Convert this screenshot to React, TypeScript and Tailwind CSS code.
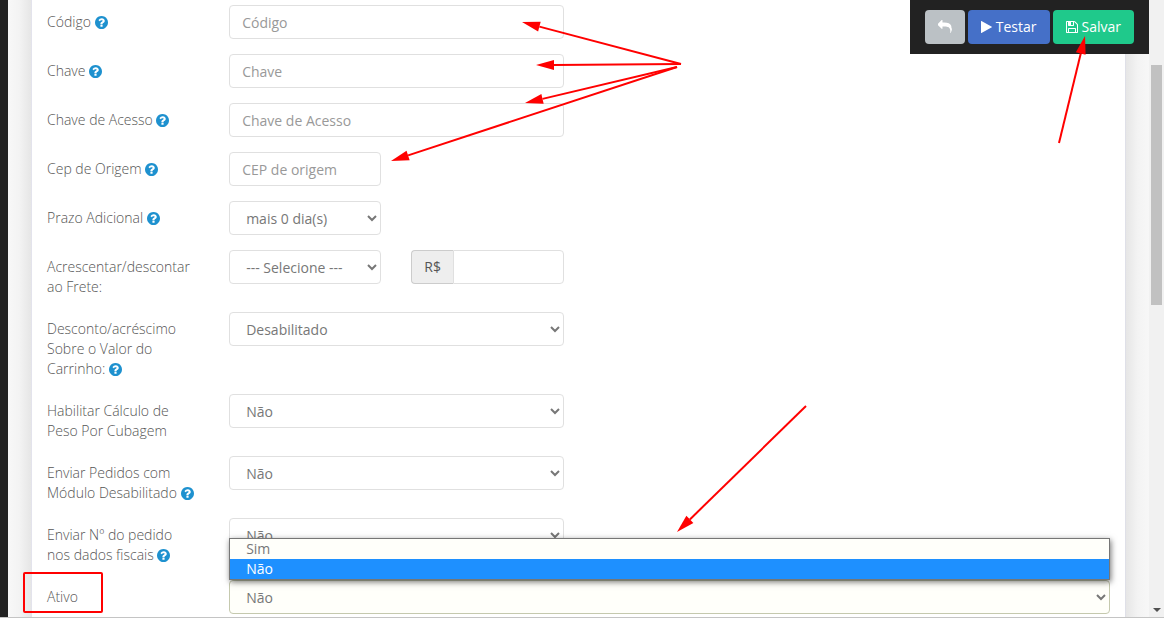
import type { ReactNode } from "react";

const ICONS = {
  help: "M1024 1376v-192q0-14-9-23t-23-9h-192q-14 0-23 9t-9 23v192q0 14 9 23t23 9h192q14 0 23-9t9-23zm256-672q0-88-55.5-163t-138.5-116-170-41q-243 0-371 213-15 24 8 42l132 100q7 6 19 6 16 0 25-12 53-68 86-92 34-24 86-24 48 0 85.5 26t37.5 59q0 38-20 61t-68 45q-63 28-115.5 86.5t-52.5 125.5v36q0 14 9 23t23 9h192q14 0 23-9t9-23q0-19 21.5-49.5t54.5-49.5q32-18 49-28.5t46-35 44.5-48 28-60.5 12.5-81zm384 192q0 209-103 385.5t-279.5 279.5-385.5 103-385.5-103-279.5-279.5-103-385.5 103-385.5 279.5-279.5 385.5-103 385.5 103 279.5 279.5 103 385.5z",
  reply:
    "M1792 1120q0 166-127 451-3 7-10.5 24t-13.5 30-13 22q-12 17-28 17-15 0-23.5-10t-8.5-25q0-9 2.5-26.5t2.5-23.5q5-68 5-123 0-112-19.5-202.5t-54-156.5-89.5-113.5-120-78-145.5-47.5-166.5-24.5-184.5-7.5h-224v256q0 26-19 45t-45 19-45-19l-512-512q-19-19-19-45t19-45l512-512q19-19 45-19t45 19 19 45v256h224q713 0 875 403 53 134 53 333z",
  play: "M1576 927l-1328 738q-23 13-39.5 3t-16.5-36v-1472q0-26 16.5-36t39.5 3l1328 738q23 13 23 31t-23 31z",
  save: "M512 1536h768v-384h-768v384zm896 0h128v-896q0-14-10-38.5t-20-34.5l-281-281q-10-10-34-20t-39-10v416q0 40-28 68t-68 28h-576q-40 0-68-28t-28-68v-416h-128v1280h128v-416q0-40 28-68t68-28h832q40 0 68 28t28 68v416zm-384-928v-320q0-13-9.5-22.5t-22.5-9.5h-192q-13 0-22.5 9.5t-9.5 22.5v320q0 13 9.5 22.5t22.5 9.5h192q13 0 22.5-9.5t9.5-22.5zm640 32v928q0 40-28 68t-68 28h-1344q-40 0-68-28t-28-68v-1344q0-40 28-68t68-28h928q40 0 88 20t76 48l280 280q28 28 48 76t20 88z",
};

const CONTROL =
  "block h-[34px] w-full rounded border border-[#e0e0e0] bg-white px-3 text-sm text-[#777] outline-none placeholder:text-[#999]";

function HelpIcon() {
  return (
    <svg viewBox="128 128 1536 1536" className="inline-block h-[13px] w-[13px] fill-[#1e91cf] align-[-2px]" aria-hidden="true">
      <path d={ICONS.help} />
    </svg>
  );
}

function Row({ id, label, help, children }: { id: string; label: string; help?: boolean; children: ReactNode }) {
  return (
    <div className="mb-[15px] grid grid-cols-12">
      <label htmlFor={id} className="col-span-2 pt-[7px] pr-4 pl-[15px] text-sm leading-5 font-light text-[#555]">
        {label} {help && <HelpIcon />}
      </label>
      {children}
    </div>
  );
}

function TextField({ id, placeholder }: { id: string; placeholder: string }) {
  return <input id={id} type="text" placeholder={placeholder} className={CONTROL} />;
}

function SelectField({ id, options }: { id: string; options: string[] }) {
  return (
    <select id={id} className={CONTROL}>
      {options.map((option) => (
        <option key={option}>{option}</option>
      ))}
    </select>
  );
}

function Arrow({ from, to }: { from: [number, number]; to: [number, number] }) {
  const length = Math.hypot(to[0] - from[0], to[1] - from[1]);
  const ux = (to[0] - from[0]) / length;
  const uy = (to[1] - from[1]) / length;
  const bx = to[0] - ux * 18;
  const by = to[1] - uy * 18;
  return (
    <g>
      <line x1={from[0]} y1={from[1]} x2={bx} y2={by} stroke="#f00" strokeWidth="2" />
      <polygon
        points={`${to[0]},${to[1]} ${bx - uy * 5},${by + ux * 5} ${bx + uy * 5},${by - ux * 5}`}
        fill="#f00"
      />
    </g>
  );
}

const half = "col-span-4 px-[15px]";
const quarter = "col-span-2 px-[15px]";

export default function App() {
  return (
    <div className="relative flex h-screen overflow-hidden border-b border-[#c4c4c4] bg-[#f7f7f7] font-['Open_Sans',sans-serif] text-sm">
      <div className="w-2 shrink-0 bg-[#222]" />
      <div className="w-6 shrink-0 border-r border-[#e3e3ec] bg-linear-to-r from-[#f8f8f8] via-[#f3f3f3] to-[#e6e6e6]" />

      <main className="min-w-0 flex-1 bg-white pt-[5px]">
        <form>
          <Row id="codigo" label="Código" help>
            <div className={half}><TextField id="codigo" placeholder="Código" /></div>
          </Row>
          <Row id="chave" label="Chave" help>
            <div className={half}><TextField id="chave" placeholder="Chave" /></div>
          </Row>
          <Row id="acesso" label="Chave de Acesso" help>
            <div className={half}><TextField id="acesso" placeholder="Chave de Acesso" /></div>
          </Row>
          <Row id="cep" label="Cep de Origem" help>
            <div className={quarter}><TextField id="cep" placeholder="CEP de origem" /></div>
          </Row>
          <Row id="prazo" label="Prazo Adicional" help>
            <div className={quarter}><SelectField id="prazo" options={["mais 0 dia(s)", "mais 1 dia(s)"]} /></div>
          </Row>
          <Row id="frete" label="Acrescentar/descontar ao Frete:">
            <div className={quarter}><SelectField id="frete" options={["--- Selecione ---"]} /></div>
            <div className={quarter}>
              <div className="flex h-[34px]">
                <label
                  htmlFor="valor"
                  className="flex items-center rounded-l border border-r-0 border-[#ccc] bg-[#eee] px-3 text-[#555]"
                >
                  R$
                </label>
                <input
                  id="valor"
                  type="text"
                  className="min-w-0 flex-1 rounded-r border border-[#e0e0e0] bg-white px-3 text-[#777] outline-none"
                />
              </div>
            </div>
          </Row>
          <Row id="desconto" label="Desconto/acréscimo Sobre o Valor do Carrinho:" help>
            <div className={half}><SelectField id="desconto" options={["Desabilitado", "Habilitado"]} /></div>
          </Row>
          <Row id="cubagem" label="Habilitar Cálculo de Peso Por Cubagem">
            <div className={half}><SelectField id="cubagem" options={["Não", "Sim"]} /></div>
          </Row>
          <Row id="modulo" label="Enviar Pedidos com Módulo Desabilitado" help>
            <div className={half}><SelectField id="modulo" options={["Não", "Sim"]} /></div>
          </Row>
          <Row id="fiscais" label="Enviar Nº do pedido nos dados fiscais" help>
            <div className={half}><SelectField id="fiscais" options={["Não", "Sim"]} /></div>
          </Row>
          <Row id="ativo" label="Ativo">
            <div className="col-span-10 px-[15px]">
              <div className="relative">
                <select
                  id="ativo"
                  defaultValue="Não"
                  className="block h-[34px] w-full rounded border border-[#c5c9ae] bg-[#fffffa] px-3 text-sm text-[#777] outline-none"
                >
                  <option>Sim</option>
                  <option>Não</option>
                </select>
                <ul
                  role="listbox"
                  aria-label="Ativo"
                  className="absolute inset-x-0 bottom-full border border-[#767676] bg-[#fffffa] leading-5 text-[#777] shadow-[1px_2px_6px_rgba(0,0,0,0.55)]"
                >
                  <li role="option" aria-selected="false" className="px-4">Sim</li>
                  <li role="option" aria-selected="true" className="bg-[#1e90ff] px-4 text-white">Não</li>
                </ul>
              </div>
            </div>
          </Row>
        </form>
      </main>

      <div className="w-6 shrink-0 border-l border-[#dfe0e8] bg-linear-to-l from-[#f7f7f7] via-[#f3f3f3] to-[#e6e6e6]" />
      <div className="flex w-[15px] shrink-0 flex-col items-center justify-between bg-[#f1f1f1] pt-[65px] pb-[5px]">
        <div className="h-60 w-[11px] bg-[#c1c1c1]" />
        <svg viewBox="0 0 8 4" className="h-1 w-2 fill-[#505050]" aria-hidden="true">
          <path d="M0 0h8L4 4z" />
        </svg>
      </div>

      <div className="absolute top-0 right-[15px] flex gap-[3px] bg-[#222] px-[15px] py-2.5 text-white">
        <button type="button" aria-label="Voltar" className="flex h-[34px] items-center rounded bg-[#bbc1c5] px-[13px]">
          <svg viewBox="0 0 1792 1792" className="h-3.5 w-3.5 fill-white"><path d={ICONS.reply} /></svg>
        </button>
        <button type="button" className="flex h-[34px] items-center gap-1 rounded bg-[#4570c8] px-[13px]">
          <svg viewBox="192 0 1408 1792" className="h-3.5 w-[11px] fill-white"><path d={ICONS.play} /></svg>
          Testar
        </button>
        <button type="button" className="flex h-[34px] items-center gap-1 rounded bg-[#1fc98b] px-[13px]">
          <svg viewBox="128 128 1536 1536" className="h-3 w-3 fill-white"><path d={ICONS.save} /></svg>
          Salvar
        </button>
      </div>

      <svg className="pointer-events-none absolute inset-0 h-full w-full" aria-hidden="true">
        <Arrow from={[681, 64]} to={[522, 22]} />
        <Arrow from={[681, 64]} to={[536, 65]} />
        <Arrow from={[677, 67]} to={[525, 103]} />
        <Arrow from={[677, 67]} to={[391, 161]} />
        <Arrow from={[1059, 143]} to={[1085, 36]} />
        <Arrow from={[806, 406]} to={[677, 532]} />
        <rect x="24" y="573" width="78" height="39" rx="1" fill="none" stroke="#f00" strokeWidth="2" />
      </svg>
    </div>
  );
}
